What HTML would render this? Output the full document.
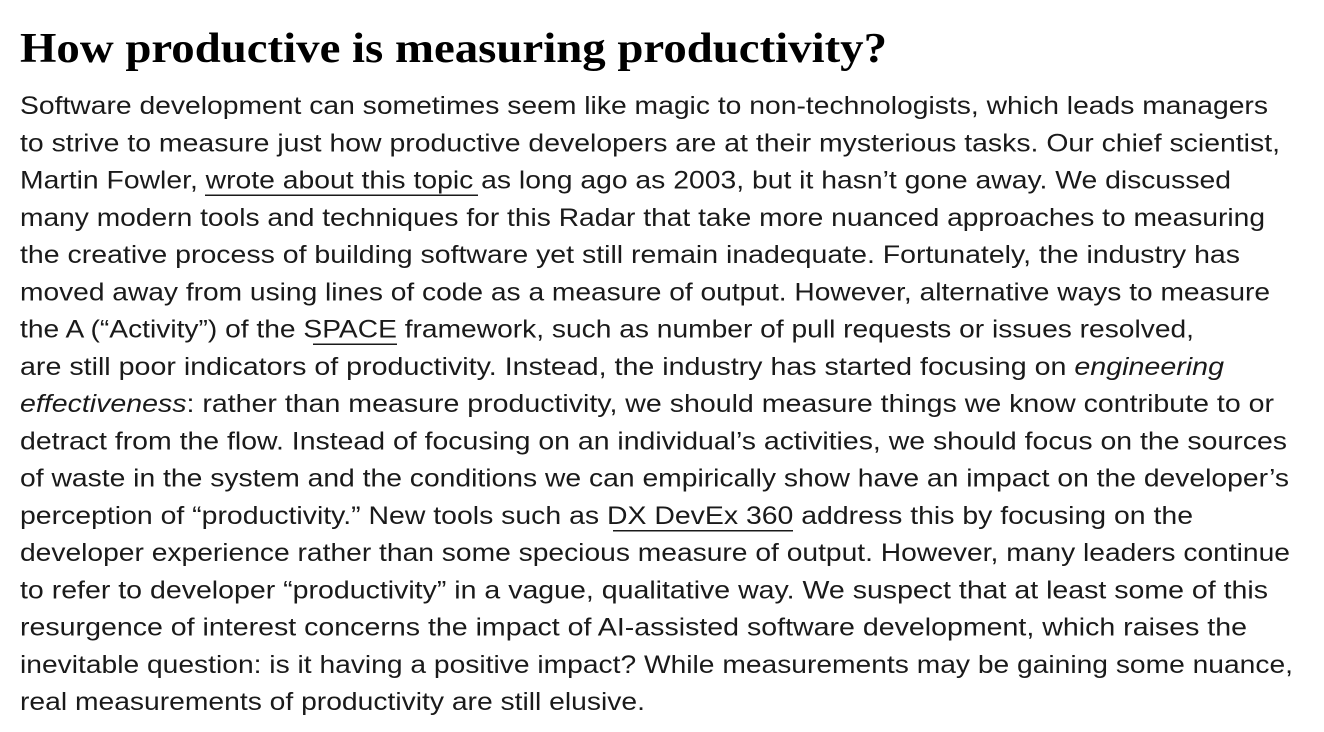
<!DOCTYPE html>
<html><head><meta charset="utf-8"><style>
html,body{margin:0;padding:0;background:#fff;width:1324px;height:732px;overflow:hidden}
svg{display:block}
text{font-family:"Liberation Sans",sans-serif;font-size:25px;fill:#1a1a1a}
.h{font-family:"Liberation Serif",serif;font-weight:bold;font-size:42px;fill:#000}
</style></head><body>
<svg width="1324" height="732" xmlns="http://www.w3.org/2000/svg">
<text class="h" x="20" y="62" textLength="867" lengthAdjust="spacingAndGlyphs">How productive is measuring productivity?</text>
<g>
<text x="20" y="114" textLength="1248" lengthAdjust="spacingAndGlyphs">Software development can sometimes seem like magic to non-technologists, which leads managers</text>
<text x="20" y="151.25" textLength="1260" lengthAdjust="spacingAndGlyphs">to strive to measure just how productive developers are at their mysterious tasks. Our chief scientist,</text>
<text x="20" y="188.5" textLength="1211" lengthAdjust="spacingAndGlyphs">Martin Fowler, wrote about this topic as long ago as 2003, but it hasn’t gone away. We discussed</text>
<text x="20" y="225.75" textLength="1245" lengthAdjust="spacingAndGlyphs">many modern tools and techniques for this Radar that take more nuanced approaches to measuring</text>
<text x="20" y="263" textLength="1220" lengthAdjust="spacingAndGlyphs">the creative process of building software yet still remain inadequate. Fortunately, the industry has</text>
<text x="20" y="300.25" textLength="1250" lengthAdjust="spacingAndGlyphs">moved away from using lines of code as a measure of output. However, alternative ways to measure</text>
<text x="20" y="337.5" textLength="1174" lengthAdjust="spacingAndGlyphs">the A (“Activity”) of the SPACE framework, such as number of pull requests or issues resolved,</text>
<text x="20" y="374.75" textLength="1204" lengthAdjust="spacingAndGlyphs">are still poor indicators of productivity. Instead, the industry has started focusing on <tspan font-style="italic">engineering</tspan></text>
<text x="20" y="412" textLength="1254" lengthAdjust="spacingAndGlyphs"><tspan font-style="italic">effectiveness</tspan>: rather than measure productivity, we should measure things we know contribute to or</text>
<text x="20" y="449.25" textLength="1267" lengthAdjust="spacingAndGlyphs">detract from the flow. Instead of focusing on an individual’s activities, we should focus on the sources</text>
<text x="20" y="486.5" textLength="1269" lengthAdjust="spacingAndGlyphs">of waste in the system and the conditions we can empirically show have an impact on the developer’s</text>
<text x="20" y="523.75" textLength="1173" lengthAdjust="spacingAndGlyphs">perception of “productivity.” New tools such as DX DevEx 360 address this by focusing on the</text>
<text x="20" y="561" textLength="1270" lengthAdjust="spacingAndGlyphs">developer experience rather than some specious measure of output. However, many leaders continue</text>
<text x="20" y="598.25" textLength="1248" lengthAdjust="spacingAndGlyphs">to refer to developer “productivity” in a vague, qualitative way. We suspect that at least some of this</text>
<text x="20" y="635.5" textLength="1227" lengthAdjust="spacingAndGlyphs">resurgence of interest concerns the impact of AI-assisted software development, which raises the</text>
<text x="20" y="672.75" textLength="1273" lengthAdjust="spacingAndGlyphs">inevitable question: is it having a positive impact? While measurements may be gaining some nuance,</text>
<text x="20" y="710" textLength="625" lengthAdjust="spacingAndGlyphs">real measurements of productivity are still elusive.</text>
</g>
<rect x="205" y="194.5" width="273" height="1.5" fill="#1a1a1a"/>
<rect x="313" y="343.5" width="84" height="1.5" fill="#1a1a1a"/>
<rect x="613" y="530" width="180" height="1.5" fill="#1a1a1a"/>
</svg>
</body></html>
